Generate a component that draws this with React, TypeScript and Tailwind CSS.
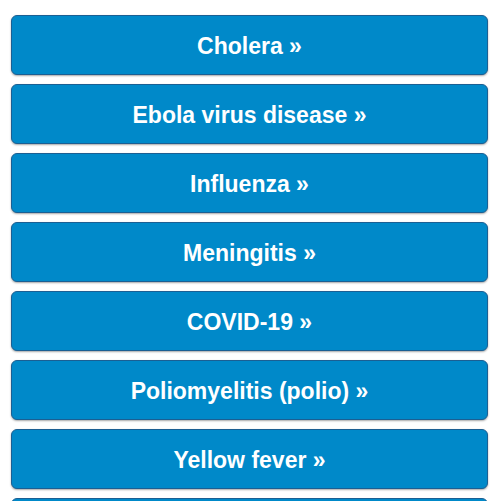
import React from "react";

const items = [
  "Cholera",
  "Ebola virus disease",
  "Influenza",
  "Meningitis",
  "COVID-19",
  "Poliomyelitis (polio)",
  "Yellow fever",
];

export default function App() {
  return (
    <div className="w-[502px] h-[501px] overflow-hidden bg-white" style={{ fontFamily: '"Liberation Sans", Arial, sans-serif' }}>
      <div className="flex flex-col gap-[9px] pt-[15px] pl-[11px] w-[488px]">
        {items.map((t) => (
          <a
            key={t}
            className="flex h-[60px] w-[477px] shrink-0 items-center justify-center rounded-[6px] border border-[#1b5f93] bg-[#0089c9] pt-[2px] text-[23px] font-bold text-white shadow-[0_1px_2px_rgba(0,0,0,0.35)]"
          >
            {t} »
          </a>
        ))}
        <div className="h-[60px] w-[477px] shrink-0 rounded-[6px] border border-[#1b5f93] bg-[#0089c9]" />
      </div>
    </div>
  );
}
